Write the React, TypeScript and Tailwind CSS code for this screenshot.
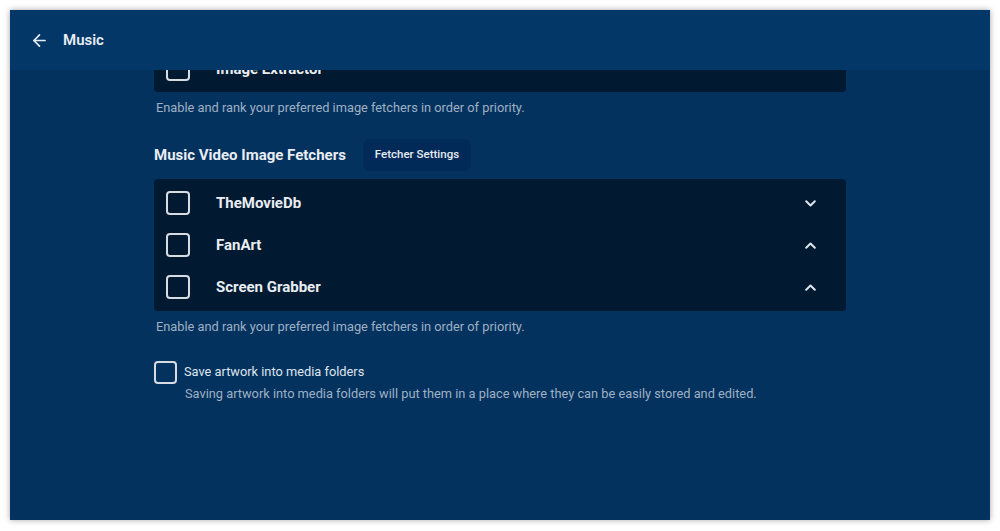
import React from 'react';
import { ArrowLeft } from 'lucide-react';

// ---------------------------------------------------------------------------
// Small pieces
// ---------------------------------------------------------------------------

function Chevron({ up }: { up?: boolean }) {
  return (
    <svg width="11" height="7" viewBox="0 0 11 7" className={up ? 'rotate-180' : ''}>
      <polyline points="1.2,1.2 5.5,5.5 9.8,1.2" fill="none" stroke="#dfe5ec" strokeWidth="2" strokeLinecap="round" strokeLinejoin="round" />
    </svg>
  );
}

function Box({ size = 'w-6 h-6' }: { size?: string }) {
  return <span className={`${size} shrink-0 rounded-[4px] border-2 border-[#d7dce3]`} />;
}

function FetcherRow({ label, up, noToggle }: { label: string; up?: boolean; noToggle?: boolean }) {
  return (
    <div className="flex h-[42px] items-center pl-[12px] pr-[30px]">
      <Box />
      <span className="ml-[26px] flex-1 text-[15px] font-bold text-[#e9edf2]">{label}</span>
      {!noToggle && <Chevron up={up} />}
    </div>
  );
}

const HINT = 'Enable and rank your preferred image fetchers in order of priority.';

// ---------------------------------------------------------------------------
// App
// ---------------------------------------------------------------------------

export default function App() {
  return (
    <div
      className="h-[531px] w-full bg-white pt-[10px] px-[10px]"
      style={{ fontFamily: 'Roboto, "Liberation Sans", sans-serif' }}
    >
      <div className="flex h-[510px] flex-col overflow-hidden bg-[#03325f] shadow-[0_0_6px_rgba(0,0,0,0.35)]">
        {/* Header */}
        <div className="relative z-10 flex h-[60px] shrink-0 items-center bg-[#023768] pl-[20px]">
          <ArrowLeft size={19} strokeWidth={2.2} className="text-[#e8edf3]" />
          <span className="ml-[14px] text-[15px] font-semibold text-[#e8edf3]">Music</span>
        </div>

        {/* Scrolled body */}
        <div className="flex-1 overflow-hidden">
          <div className="mx-auto w-[692px]">
            <div className="mt-[-24px] rounded-[4px] bg-[#011a31] py-[2px]">
              <FetcherRow label="Image Extractor" noToggle />
            </div>
            <p className="mt-[6px] pl-[2px] text-[12.8px] leading-5 text-[#9fb0c3]">{HINT}</p>

            <div className="mt-[21px] flex h-[32px] items-center">
              <h2 className="text-[15px] font-bold text-[#e9edf2]">Music Video Image Fetchers</h2>
              <button className="ml-[17px] h-[32px] rounded-[7px] bg-[#022a58] px-[12px] text-[11.5px] font-medium text-[#e6ebf1]">
                Fetcher Settings
              </button>
            </div>

            <div className="mt-[8px] rounded-[4px] bg-[#011a31] py-[3px]">
              <FetcherRow label="TheMovieDb" />
              <FetcherRow label="FanArt" up />
              <FetcherRow label="Screen Grabber" up />
            </div>
            <p className="mt-[6px] pl-[2px] text-[12.8px] leading-5 text-[#9fb0c3]">{HINT}</p>

            <div className="mt-[24px] flex items-start">
              <Box size="w-[23px] h-[23px]" />
              <div className="ml-[7px] pt-[1px]">
                <div className="text-[12.8px] leading-5 text-[#dfe5ec]">Save artwork into media folders</div>
                <div className="mt-[2px] pl-[1px] text-[12.8px] leading-5 text-[#9fb0c3]">
                  Saving artwork into media folders will put them in a place where they can be easily stored and edited.
                </div>
              </div>
            </div>
          </div>
        </div>
      </div>
    </div>
  );
}
